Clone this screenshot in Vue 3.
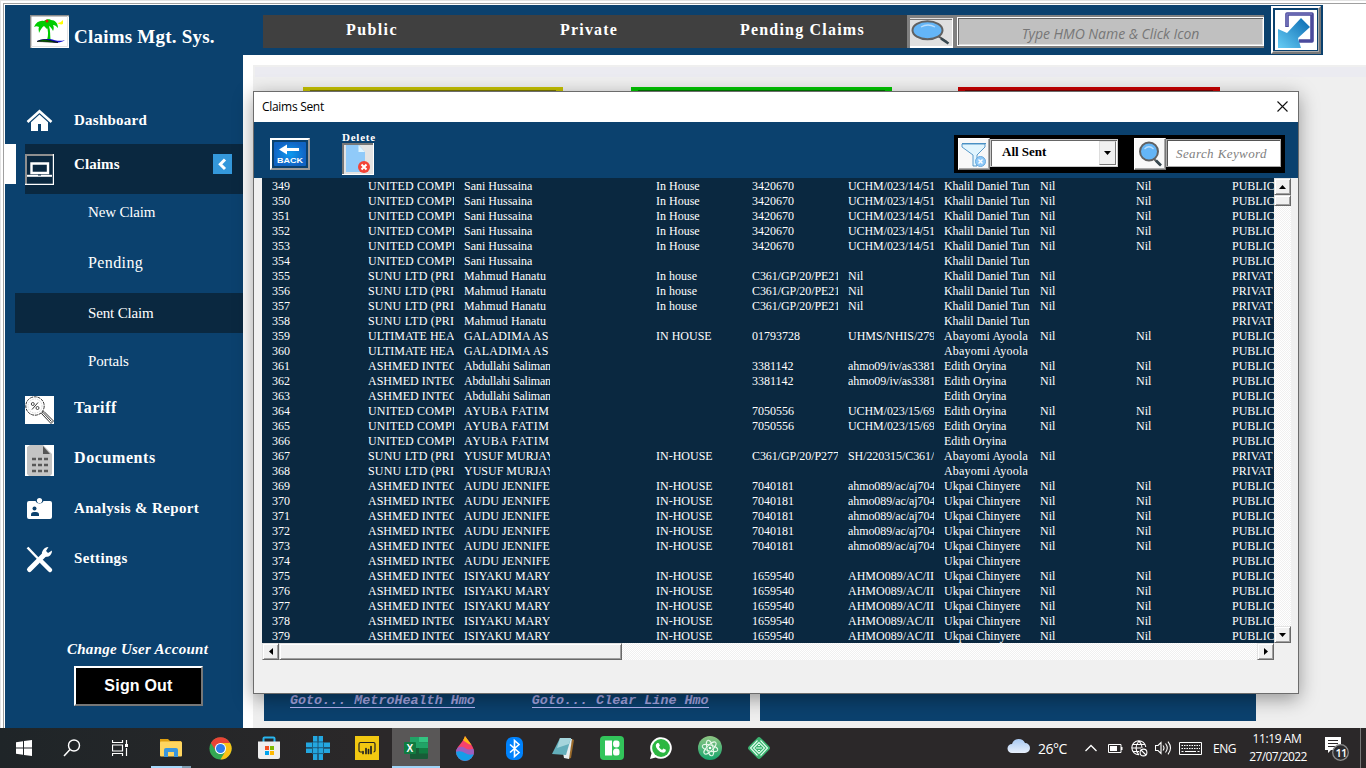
<script setup>
const nil = 'Nil'
const mk = (from, to, cells) =>
  Array.from({ length: to - from + 1 }, (_, i) => [String(from + i), ...cells])

const UN = 'UNITED COMPR'
const SU = 'SUNU LTD (PRI'
const UL = 'ULTIMATE HEA'
const AS = 'ASHMED INTEG'
const KD = 'Khalil Daniel Tun'
const AA = 'Abayomi Ayoola'
const EO = 'Edith Oryina'
const UC = 'Ukpai Chinyere'
const PU = 'PUBLIC'
const PR = 'PRIVAT'

const rows = [
  ...mk(349, 353, [UN, 'Sani Hussaina', '', 'In House', '3420670', 'UCHM/023/14/51', KD, nil, nil, PU]),
  ...mk(354, 354, [UN, 'Sani Hussaina', '', '', '', '', KD, '', '', PU]),
  ...mk(355, 357, [SU, 'Mahmud Hanatu', '', 'In house', 'C361/GP/20/PE21', nil, KD, nil, '', PR]),
  ...mk(358, 358, [SU, 'Mahmud Hanatu', '', '', '', '', KD, '', '', PR]),
  ...mk(359, 359, [UL, 'GALADIMA AS', '', 'IN HOUSE', '01793728', 'UHMS/NHIS/279', AA, nil, nil, PU]),
  ...mk(360, 360, [UL, 'GALADIMA AS', '', '', '', '', AA, '', '', PU]),
  ...mk(361, 362, [AS, 'Abdullahi Saliman', '', '', '3381142', 'ahmo09/iv/as3381', EO, nil, nil, PU]),
  ...mk(363, 363, [AS, 'Abdullahi Saliman', '', '', '', '', EO, '', '', PU]),
  ...mk(364, 365, [UN, 'AYUBA FATIM', '', '', '7050556', 'UCHM/023/15/69', EO, nil, nil, PU]),
  ...mk(366, 366, [UN, 'AYUBA FATIM', '', '', '', '', EO, '', '', PU]),
  ...mk(367, 367, [SU, 'YUSUF MURJAY', '', 'IN-HOUSE', 'C361/GP/20/P277', 'SH/220315/C361/', AA, nil, '', PR]),
  ...mk(368, 368, [SU, 'YUSUF MURJAY', '', '', '', '', AA, '', '', PR]),
  ...mk(369, 373, [AS, 'AUDU JENNIFE', '', 'IN-HOUSE', '7040181', 'ahmo089/ac/aj704', UC, nil, nil, PU]),
  ...mk(374, 374, [AS, 'AUDU JENNIFE', '', '', '', '', UC, '', '', PU]),
  ...mk(375, 379, [AS, 'ISIYAKU MARY', '', 'IN-HOUSE', '1659540', 'AHMO089/AC/II', UC, nil, nil, PU]),
]

const spacing = {
  [UN]: 'loose', [SU]: 'loose', [AA]: 'loose', [KD]: 'snug', [PR]: '',
  'GALADIMA AS': 'loose', 'AYUBA FATIM': 'wide', 'YUSUF MURJAY': '', 'AUDU JENNIFE': 'roomy',
  'Abdullahi Saliman': 'tight', 'ahmo09/iv/as3381': 'snug', 'ahmo089/ac/aj704': 'snug',
  'C361/GP/20/PE21': 'snug', 'C361/GP/20/P277': 'snug', 'UCHM/023/14/51': 'snug', 'UCHM/023/15/69': 'snug',
  'SH/220315/C361/': 'snug', 'Mahmud Hanatu': 'roomy',
}
</script>

<template>
  <div class="screen">
    <div class="app">
      <aside class="side">
        <div class="brand">
          <svg class="logo" width="39" height="33" viewBox="0 0 39 33">
            <rect width="39" height="33" fill="#fff" />
            <path d="M.7 33V.7H39" fill="none" stroke="#8c8c8c" stroke-width="1.400" />
            <path d="M37.500 1V31.500H1" fill="none" stroke="#e3e3e3" />
            <path d="M16.500 11c2 5 2 9 .5 14h3.500c-.5-5 0-9-1.500-14z" fill="#0c0" />
            <path d="M4 12c2-5 6-7 10-6 2-2 6-2 7-1 4 0 7 3 7 8-2-2-3-3-5-3 1 2 1 4 0 6-1-2-2-4-4-5l-2 3-3-3c-2 1-3 3-5 7 0-2-1-4 0-6-2-1-3-1-5 0z" fill="#0c0" />
            <circle cx="17" cy="6" r="1.500" fill="#e02010" />
            <path d="M27 8c3 0 4-1 6-3v4c-2 1-4 0-6-1z" fill="#ff0" />
            <path d="M7 26c5-2 9-2 13-2 5 1 9 3 15 1-4 3-9 3-13 2-5-1-9-1-15-1z" fill="#11c" />
            <path d="M7 26.500c5-2.500 9-2 13-1l8 2c-7 0-13-1-21-1z" fill="#060" stroke="#000" stroke-width=".6" />
          </svg>
          <span>Claims Mgt. Sys.</span>
        </div>
        <nav>
          <div class="item dash">
            <svg class="ico" width="30" height="30" viewBox="0 0 30 30">
              <path d="M2.500 17L14.500 6.200 26.500 17" fill="none" stroke="#fff" stroke-width="2.600" />
              <path d="M6 17.200l8.500-7.700 8.500 7.700V26h-7v-7h-3v7H6z" fill="#fff" />
            </svg>
            <span>Dashboard</span>
          </div>
          <div class="item claims">
            <svg class="ico" width="29" height="31" viewBox="0 0 29 31">
              <path d="M1 31V1H28" fill="none" stroke="#8f8f8f" stroke-width="2" />
              <path d="M28.500 0V30.500H0" fill="none" stroke="#fff" stroke-width="1.400" />
              <path d="M6.500 9.500H23V19H6.500z" fill="none" stroke="#fff" stroke-width="2.400" />
              <path d="M2 21.800H27" stroke="#fff" stroke-width="2" /><path d="M13 21h3" stroke="#0a2840" stroke-width="1" />
            </svg>
            <span>Claims</span>
            <svg class="chev" width="19" height="20" viewBox="0 0 19 20">
              <rect width="19" height="20" fill="#3498db" />
              <path d="M12 5.500L7.300 10.300 12 15" fill="none" stroke="#fff" stroke-width="3" />
            </svg>
          </div>
          <div class="sub new">New Claim</div>
          <div class="sub pend">Pending</div>
          <div class="sub sent">Sent Claim</div>
          <div class="sub port">Portals</div>
          <div class="item tariff">
            <svg class="ico" width="29" height="28" viewBox="0 0 29 28">
              <rect width="29" height="28" fill="#fff" />
              <circle cx="10" cy="10" r="9.200" fill="none" stroke="#333" stroke-width="1" stroke-dasharray="3 .8" />
              <circle cx="10" cy="10" r="7" fill="none" stroke="#bbb" stroke-width=".6" stroke-dasharray="1.500 1" />
              <circle cx="7.800" cy="8" r="1.500" fill="none" stroke="#222" stroke-width=".8" /><circle cx="12.500" cy="12" r="1.500" fill="none" stroke="#222" stroke-width=".8" />
              <path d="M13 6.500L7 13.500" stroke="#222" stroke-width=".9" />
              <path d="M16.500 17.500L19 15.500 28.500 25 26 27.500z M18.500 17l8 8.500" fill="none" stroke="#333" stroke-width="1" />
            </svg>
            <span>Tariff</span>
          </div>
          <div class="item docs">
            <svg class="ico" width="29" height="31" viewBox="0 0 29 31">
              <rect width="29" height="31" fill="#fff" />
              <path d="M5 0H18l9 9v20l-2 2H4l-2-2V2z" fill="#c4c4c4" />
              <path d="M18 1v8h7z" fill="#555" />
              <path d="M7 14h4m2 0h4m2 0h4M7 20h4m2 0h4m2 0h4M7 26h4m2 0h4m2 0h4" stroke="#585858" stroke-width="2.400" />
            </svg>
            <span>Documents</span>
          </div>
          <div class="item report">
            <svg class="ico" width="30" height="30" viewBox="0 0 30 30">
              <path d="M4 7h6.500q1 2.500 4 2.500t4-2.500H25q2 0 2 2v14q0 2-2 2H4q-2 0-2-2V9q0-2 2-2z" fill="#fff" />
              <circle cx="14.500" cy="6.500" r="2.600" fill="#fff" />
              <circle cx="9.500" cy="14.500" r="2" fill="#0b416e" /><path d="M6 22v-1.500q0-2.500 3-2.500h2q3 0 3 2.500V22z" fill="#0b416e" />
            </svg>
            <span>Analysis &amp; Report</span>
          </div>
          <div class="item sett">
            <svg class="ico" width="30" height="30" viewBox="0 0 30 30">
              <path d="M2.500 3.500l11 11.500" stroke="#fff" stroke-width="2.500" /><path d="M17 18l8 8" stroke="#fff" stroke-width="4.500" stroke-linecap="round" />
              <path d="M4.500 25.500L20 10" stroke="#fff" stroke-width="5" stroke-linecap="round" />
              <path d="M17.500 7q2-4 6-4l-2.500 4 2 2 4-2.500q0 4-3.500 6-4 1-6-1-1.500-2.500 0-4.500z" fill="#fff" />
            </svg>
            <span>Settings</span>
          </div>
        </nav>
        <div class="change">Change User Account</div>
        <button class="signout">Sign Out</button>
      </aside>

      <main class="main">
        <header class="top">
          <div class="menu">
            <span class="m1">Public</span><span class="m2">Private</span><span class="m3">Pending Claims</span>
          </div>
          <div class="hmo">
            <svg class="hmoicon" width="43" height="30" viewBox="0 0 43 30">
              <rect width="43" height="30" fill="#e0e0e0" />
              <path d="M0 1.500H42" stroke="#777" /><path d="M0 29H43" stroke="#fff" stroke-width="2" /><path d="M42.500 0V30" stroke="#fff" />
              <path d="M28 18l9 6" stroke="#555" stroke-width="2" /><path d="M31 20.500l7.500 5" stroke="#37474f" stroke-width="2.600" />
              <ellipse cx="17.500" cy="12.300" rx="15" ry="9" fill="#64b5f6" stroke="#616161" stroke-width="2" />
              <path d="M11 9q7-4 14 0" fill="none" stroke="#bbdefb" stroke-width="1.300" />
            </svg>
            <div class="hmoinput">Type HMO Name &amp; Click Icon</div>
          </div>
          <div class="exit">
            <svg width="42" height="40" viewBox="0 0 42 40">
              <defs><linearGradient id="ar" x1="1" y1="0" x2="0" y2="1"><stop offset="0" stop-color="#0868b0" /><stop offset="1" stop-color="#67cdf5" /></linearGradient></defs>
              <rect width="42" height="40" fill="#fff" />
              <path d="M12 17V4H37V31H24" fill="none" stroke="#4b4a9c" stroke-width="3.600" stroke-linejoin="round" />
              <path d="M12 16V4H37" fill="none" stroke="#8584c8" stroke-width="1.200" />
              <path d="M26 8l9 9-12 11 3 10H3V19l9 4z" fill="url(#ar)" />
            </svg>
          </div>
        </header>
        <section class="content">
          <div class="band"></div>
          <div class="cards"><i class="yel"></i><i class="grn"></i><i class="red"></i></div>
          <div class="panels">
            <div class="panel"><a class="l1">Goto... MetroHealth Hmo</a><a>Goto... Clear Line Hmo</a></div>
            <div class="panel"></div>
          </div>
        </section>
      </main>

      <div class="dialog">
        <div class="title">
          <span>Claims Sent</span>
          <svg width="11" height="11" viewBox="0 0 11 11"><path d="M.5.500l10 10M10.500.5l-10 10" stroke="#111" stroke-width="1.100" /></svg>
        </div>
        <div class="tools">
          <div class="back">
            <svg width="32" height="24" viewBox="0 0 32 24">
              <defs><radialGradient id="bk"><stop offset="0" stop-color="#0b9af0" /><stop offset="1" stop-color="#1164c4" /></radialGradient></defs>
              <rect width="32" height="24" rx="1" fill="url(#bk)" />
              <path d="M5 7.500l8-5V6H25v3H13v3.500z" fill="#fff" />
              <text x="3" y="20.500" font-family="Liberation Sans" font-weight="bold" font-size="7.500" fill="#fff" textLength="26" lengthAdjust="spacingAndGlyphs">BACK</text>
            </svg>
          </div>
          <div class="del">
            <span>Delete</span>
            <svg width="32" height="32" viewBox="0 0 32 32">
              <rect width="32" height="32" fill="#e3e3e3" />
              <path d="M0 1H31M1 0V32" stroke="#777" stroke-width="2" /><path d="M0 31.500H32M31.500 0V32" stroke="#fff" />
              <path d="M4 2H17l6 7v20H4z" fill="#90caf9" /><path d="M16.500 2v7H23z" fill="#e1f5fe" />
              <circle cx="22" cy="24" r="6" fill="#f44336" /><path d="M19.500 21.500l5 5m0-5l-5 5" stroke="#fff" stroke-width="2" />
            </svg>
          </div>
          <div class="filters">
            <div class="fbtn">
              <svg width="28" height="27" viewBox="0 0 28 27">
                <path d="M2 3H25v3l-8 8v11h-4V14L2 6z" fill="#e1f5fe" stroke="#4a90c4" stroke-width=".9" /><path d="M2 2.500H26" stroke="#4a90c4" />
                <circle cx="20.500" cy="20.500" r="5" fill="#90caf9" stroke="#6aaade" /><path d="M18.500 18.500l4 4m0-4l-4 4" stroke="#fff" stroke-width="1.400" />
              </svg>
            </div>
            <div class="combo"><span>All Sent</span><div class="arrow"><svg width="7" height="4" viewBox="0 0 7 4"><path d="M0 0H7L3.500 4z" /></svg></div></div>
            <div class="fbtn f2">
              <svg width="28" height="27" viewBox="0 0 28 27">
                <path d="M17 17l7 7" stroke="#616161" stroke-width="2" /><path d="M20 19.500l5 5" stroke="#37474f" stroke-width="2.600" />
                <circle cx="13" cy="10.500" r="9" fill="#64b5f6" stroke="#616161" stroke-width="2" /><path d="M8.500 8q4.500-4.500 9 0" fill="none" stroke="#bbdefb" stroke-width="1.300" />
              </svg>
            </div>
            <div class="kw">Search Keyword</div>
          </div>
        </div>
        <div class="grid">
          <div class="list">
            <div v-for="r in rows" :key="r[0]" class="row">
              <span v-for="(c, i) in r" :key="i" :class="spacing[c]">{{ c }}</span>
            </div>
          </div>
          <div class="vbar">
            <div class="sb"><svg width="7" height="4" viewBox="0 0 7 4"><path d="M0 4H7L3.500 0z" /></svg></div>
            <div class="vthumb"></div>
            <div class="sb end"><svg width="7" height="4" viewBox="0 0 7 4"><path d="M0 0H7L3.500 4z" /></svg></div>
          </div>
          <div class="hbar">
            <div class="sb"><svg width="4" height="7" viewBox="0 0 4 7"><path d="M4 0V7L0 3.500z" /></svg></div>
            <div class="hthumb"></div>
            <div class="sb end"><svg width="4" height="7" viewBox="0 0 4 7"><path d="M0 0V7L4 3.500z" /></svg></div>
          </div>
        </div>
      </div>
    </div>

    <footer class="task">
      <div class="tb"><svg width="16" height="16" viewBox="0 0 16 16"><path d="M0 2.200L7 1.200V7.500H0zM8 1.100L16 0V7.500H8zM0 8.500H7V14.800L0 13.800zM8 8.500H16V16L8 14.900z" fill="#fff" /></svg></div>
      <div class="tb"><svg width="18" height="18" viewBox="0 0 18 18"><circle cx="11" cy="6.500" r="5.500" fill="none" stroke="#fff" stroke-width="1.400" /><path d="M7 10.500L1 17" stroke="#fff" stroke-width="1.500" /></svg></div>
      <div class="tb"><svg width="16" height="16" viewBox="0 0 16 16"><path d="M.5 0V2.500H10.500V0M.5 5H10.500V11H.5zM.5 16V13.500H10.500V16M14.500 0V4M14.500 8V16" fill="none" stroke="#fff" stroke-width="1.200" /><rect x="13" y="4" width="3" height="3" fill="#fff" /></svg></div>
      <div class="pins">
        <div class="tb open"><svg width="22" height="20" viewBox="0 0 22 20"><path d="M0 1H8l2 2H21V6H0z" fill="#e0a010" /><rect y="3.500" width="22" height="15" rx="1" fill="#ffd660" /><path d="M4 19V12q0-2 2-2H16q2 0 2 2V19H14V14H8V19z" fill="#3a96dd" /></svg></div>
        <div class="tb"><svg width="23" height="23" viewBox="0 0 24 24"><circle cx="12" cy="12" r="11.500" fill="#34a853" /><path d="M2 6.200A11.500 11.500 0 0 1 22 6.200H12L7 14z" fill="#ea4335" /><path d="M22 6.200A11.500 11.500 0 0 1 12 23.500L17 15 17 9.500 12 6.200z" fill="#fbc116" /><circle cx="12" cy="12" r="5.800" fill="#fff" /><circle cx="12" cy="12" r="4.700" fill="#2f7ded" /></svg></div>
        <div class="tb"><svg width="24" height="24" viewBox="0 0 24 24"><path d="M6.500 6V2.500q0-1 1-1h9q1 0 1 1V6" fill="none" stroke="#28b5ee" stroke-width="2" /><path d="M1 5.500H23V21q0 2-2 2H3q-2 0-2-2z" fill="#eee" /><path d="M8 10h4v4H8z" fill="#f25022" /><path d="M13 10h4v4h-4z" fill="#7fba00" /><path d="M8 15h4v4H8z" fill="#00a4ef" /><path d="M13 15h4v4h-4z" fill="#ffb900" /></svg></div>
        <div class="tb"><svg width="24" height="24" viewBox="0 0 24 24"><path d="M7 0h4.500v24H7zM12.500 0H17v24h-4.500zM0 6.500h24V11H0zM0 12.500h24V17H0z" fill="#23a7e0" /><path d="M7 5.900h10M0 11.700h24M7 17.600h10M6.500 6v12M12 0v24M17.500 6v12" stroke="#1c5d80" stroke-width="1" /></svg></div>
        <div class="tb"><svg width="24" height="24" viewBox="0 0 24 24"><rect width="24" height="24" fill="#f2c811" /><path d="M7 16H5.500Q4 16 4 14.500V8q0-1.500 1.500-1.500h13Q20 6.500 20 8v6.500q0 1.500-1.500 1.500" fill="none" stroke="#222" stroke-width="1.200" /><path d="M8 17.500v-2M11 17.500v-5M13.500 17.500v-4M16 17.500v-7" stroke="#222" stroke-width="1.700" stroke-linecap="round" /></svg></div>
        <div class="tb active"><svg width="24" height="22" viewBox="0 0 24 22"><rect x="6" width="18" height="22" rx="1" fill="#185c37" /><path d="M6 0h9v11H6z" fill="#21a366" /><path d="M15 0h9v5.500h-9z" fill="#33c481" /><path d="M15 5.500h9V11h-9z" fill="#21a366" /><path d="M15 11h9v5.500h-9z" fill="#107c41" /><rect y="5" width="12" height="12" rx="1" fill="#107c41" /><text x="2.600" y="14.500" font-family="Liberation Sans" font-weight="bold" font-size="10" fill="#fff">X</text></svg></div>
        <div class="tb"><svg width="20" height="25" viewBox="0 0 20 25"><defs><clipPath id="dp"><path d="M10 0C15 7 19 11 19 16a9 9 0 0 1-18 0C1 11 8 7 10 0z" /></clipPath></defs><g clip-path="url(#dp)"><rect width="20" height="25" fill="#f5426c" /><path d="M5 0h15v10Q14 9 9 5z" fill="#fdb813" /><path d="M0 13q6-4 10-1t10 0v6q-5 3-9 0T0 17z" fill="#9b5fc0" /><path d="M0 16q6-2 10 1t10 1v8H0z" fill="#159de9" /></g></svg></div>
        <div class="tb"><svg width="17" height="23" viewBox="0 0 17 23"><rect width="17" height="23" rx="6.500" fill="#0082fc" /><path d="M4 7.500l9 8-4.500 4V3.500L13 7.500l-9 8" fill="none" stroke="#fff" stroke-width="1.600" /></svg></div>
        <div class="tb"><svg width="24" height="22" viewBox="0 0 24 22"><path d="M21 2l2 1-3 18-3 1z" fill="#9a6a2a" /><path d="M9 1l12 1-3 20-5-1z" fill="#e8eef0" /><path d="M9 1h11l-5 17L1 17z" fill="#63aebb" /><path d="M9 1h11l-2 6L6 11z" fill="#a5d5dc" /></svg></div>
        <div class="tb"><svg width="24" height="24" viewBox="0 0 24 24"><rect width="24" height="24" rx="4" fill="#32c45a" /><path d="M5 4.500h7v15H5z" fill="#fff" /><path d="M15 4.500h2a2.500 2.500 0 0 1 2.500 2.500v1.500a3 3 0 0 1-3 3q-3.500 0-3.500-3.500t2-3.500zM16.500 12.500a3 3 0 0 1 3 3V17a2.500 2.500 0 0 1-2.500 2.500h-2q-2 0-2-3.500t3.500-3.500z" fill="#fff" /></svg></div>
        <div class="tb"><svg width="22" height="22" viewBox="0 0 24 24"><path d="M0 24l1.700-6.200A11.800 11.800 0 1 1 6.200 22.300z" fill="#fff" /><circle cx="12" cy="12" r="9.700" fill="#2cb742" /><path d="M8 6.500l1.800.2 1 2.700-1.100 1.500q1.300 2.300 3.500 3.200l1.400-1.500 2.700 1.300q0 3-3 3.300Q11 17 8.300 13.500 4.500 9 8 6.500z" fill="#fff" /></svg></div>
        <div class="tb"><svg width="24" height="24" viewBox="0 0 24 24"><defs><linearGradient id="at" x1="0" y1="0" x2="0" y2="1"><stop offset="0" stop-color="#8fc583" /><stop offset="1" stop-color="#16a56c" /></linearGradient></defs><circle cx="12" cy="12" r="12" fill="url(#at)" /><g fill="none" stroke="#e6f7e8" stroke-width="1"><ellipse cx="12" cy="12" rx="8" ry="3" transform="rotate(15 12 12)" /><ellipse cx="12" cy="12" rx="8" ry="3" transform="rotate(75 12 12)" /><ellipse cx="12" cy="12" rx="8" ry="3" transform="rotate(135 12 12)" /></g><circle cx="12" cy="12" r="1.300" fill="#fff" /></svg></div>
        <div class="tb"><svg width="24" height="24" viewBox="0 0 24 24"><rect x="3.600" y="3.600" width="16.800" height="16.800" rx="2.500" transform="rotate(45 12 12)" fill="#3cb371" /><path d="M10.500 4.500L3.500 12l7 7.500M13.500 4.500l7 7.500-7 7.500M12 6.500L6.500 12l5.500 5.500 5.500-5.500z" fill="none" stroke="#e4fff0" stroke-width="1.100" /><path d="M9 12h6M11 9.500h2M11 14.500h2" stroke="#e4fff0" /></svg></div>
      </div>
      <div class="tray">
        <svg class="cloud" width="23" height="16" viewBox="0 0 23 16"><defs><linearGradient id="cl" x1="0" y1="0" x2="0" y2="1"><stop offset="0" stop-color="#a9c9f2" /><stop offset="1" stop-color="#e8f0fc" /></linearGradient></defs><path d="M5 15a4.500 4.500 0 0 1 0-9 7 7 0 0 1 13-1 5 5 0 0 1 0 10z" fill="url(#cl)" /></svg>
        <span class="temp">26°C</span>
        <svg class="up" width="12" height="8" viewBox="0 0 12 8"><path d="M.5 7L6 1.500 11.500 7" fill="none" stroke="#fff" stroke-width="1.300" /></svg>
        <svg class="bat" width="15" height="9" viewBox="0 0 15 9"><path d="M.5.5H13v8H.5z" fill="none" stroke="#fff" /><path d="M2 2h7v5H2zM13 3h1.500v3H13z" fill="#fff" /></svg>
        <svg class="globe" width="17" height="17" viewBox="0 0 17 17"><g fill="none" stroke="#fff" stroke-width="1.100"><path d="M14.800 7A7 7 0 1 0 8 14.700M1 8h9M2 4.500h12M2 11.500h6M8 1q-6 7 0 14M8 1q3 3 3 7" /><circle cx="12.500" cy="12.500" r="3.400" /><path d="M10 10l5 5" /></g></svg>
        <svg class="spk" width="17" height="14" viewBox="0 0 17 14"><g fill="none" stroke="#fff" stroke-width="1.100"><path d="M.5 4.500H3L6 1.500V12.500L3 9.500H.5zM8 4.500q2 2.500 0 5M10.500 2.500q3.500 4.500 0 9M13 .7q5 6.300 0 12.600" /></g></svg>
        <svg class="kbd" width="23" height="13" viewBox="0 0 23 13"><path d="M.5.5H22.500V12.500H.5z" fill="none" stroke="#fff" /><path d="M2.500 3.500H21M2.500 6.500H21" stroke="#fff" stroke-dasharray="1.500 1" /><path d="M2.500 9.500h2M6 9.500H17M18.500 9.500h2" stroke="#fff" /></svg>
        <span class="eng">ENG</span>
        <div class="clock"><span class="t1">11:19 AM</span><span class="t2">27/07/2022</span></div>
        <svg class="note" width="26" height="26" viewBox="0 0 26 26"><path d="M1 1H17V14H7L4 17V14H1z" fill="#fff" /><path d="M4 4.500h10M4 7.500h10M4 10.500h7" stroke="#2b2829" stroke-width="1.100" /><circle cx="16.500" cy="16.500" r="7.800" fill="#2d2d30" stroke="#8d8d8d" stroke-width="1.300" /><text x="11.600" y="21" font-family="Open Sans, sans-serif" font-size="11" font-weight="600" fill="#fff" letter-spacing="-1">11</text></svg>
        <i class="desk"></i>
      </div>
    </footer>
  </div>
</template>

<style>
html, body { margin: 0; overflow: hidden; }
</style>

<style scoped>
* { box-sizing: border-box; }
svg { display: block; flex: none; }
.screen { width: 1366px; height: 768px; display: flex; flex-direction: column; background: #fff; overflow: hidden; font-family: "Liberation Serif", serif; white-space: nowrap; }
.app { height: 728px; position: relative; display: flex; border: 1px solid #e3e3e3; border-width: 1px 0 0 1px; background: #fff; padding: 4px 0 0 4px; box-shadow: inset 2px 2px 0 #fff, inset 3px 3px 0 #a0a0a0; }
.side { width: 238px; height: 723px; background: #0b416e; color: #fff; flex: none; }
.brand { height: 91px; padding: 10px 0 0 25px; display: flex; font-size: 19px; font-weight: bold; letter-spacing: .22px; }
.brand span { margin: 11px 0 0 5px; line-height: 22px; }
.item { height: 50px; display: flex; align-items: center; padding-left: 20px; font-size: 15px; font-weight: bold; }
.item .ico { width: 30px; margin-right: 19px; }
.dash { height: 48px; letter-spacing: .25px; }
.claims { position: relative; align-items: flex-start; letter-spacing: .1px; background: linear-gradient(90deg, #0b416e 20px, #0a2840 20px); }
.claims::before { content: ""; position: absolute; left: 0; top: 0; width: 11px; height: 40px; background: #fff; }
.claims .ico { width: 29px; margin: 10px 20px 0 0; }
.claims span { line-height: 20px; margin-top: 10px; }
.claims .chev { margin: 10px 11px 0 auto; }
.sub { padding-left: 83px; font-size: 15px; display: flex; align-items: center; letter-spacing: -.15px; }
.new { height: 36px; }
.pend { height: 63px; padding-top: 3px; font-size: 16px; letter-spacing: .4px; }
.sent { height: 40px; margin-left: 10px; padding-left: 73px; background: #0a2840; }
.port { height: 44px; margin-top: 6px; }
.tariff { font-size: 16px; letter-spacing: .6px; }
.tariff .ico, .docs .ico { width: 29px; margin-right: 20px; margin-top: 4px; }
.docs { font-size: 16px; letter-spacing: .6px; }
.report { letter-spacing: .35px; }
.sett { letter-spacing: .35px; }
.report .ico, .sett .ico { margin-top: 2px; }
.change { margin: 57px 0 0 62px; font-size: 15px; line-height: 18px; font-weight: bold; font-style: italic; letter-spacing: .26px; }
.signout { display: block; margin: 8px 0 0 69px; width: 129px; height: 40px; padding: 0; background: #000; color: #fff; border: 2px solid; border-color: #fff #777 #777 #fff; font: bold 16px "Liberation Sans", sans-serif; letter-spacing: .2px; }
.main { flex: 1; height: 723px; display: flex; flex-direction: column; }
.top { width: 1080px; height: 50px; background: #0b416e; padding-left: 20px; display: flex; }
.menu { margin-top: 10px; width: 644px; height: 33px; background: #404040; color: #fff; font-size: 16px; font-weight: bold; letter-spacing: 1.2px; line-height: 30px; display: flex; }
.m1 { width: 214px; padding-left: 83px; letter-spacing: 1.4px; }
.m2 { width: 263px; padding-left: 83px; }
.hmo { margin-top: 10px; width: 357px; height: 33px; background: #808080; display: flex; padding: 3px 0 0 3px; }
.hmoinput { margin: -1px 0 0 4px; width: 307px; height: 29px; background: #c0c0c0; border: 1px solid #fff; box-shadow: inset 1px 1px 0 #666, inset -1px -1px 0 #ddd; text-align: center; font: italic 14px/32px "Open Sans", sans-serif; letter-spacing: -.05px; color: #777; }
.exit { margin: 1px 0 0 7px; width: 50px; height: 48px; border: 2px solid; border-color: #fff #777 #777 #fff; padding: 2px; box-shadow: inset -1px -1px 0 #aaa; }
.content { margin: 10px 0 0 10px; height: 663px; background: #efefef; padding: 2px 0 0 2px; }
.band { height: 10px; background: #ebebf1; }
.cards { display: flex; margin: 10px 0 0 48px; height: 40px; }
.cards i { border: 7px solid; border-top-width: 3px; }
.yel { width: 260px; background: #777400; border-color: #c4c000 !important; }
.grn { width: 261px; margin-left: 68px; background: #007300; border-color: #00c400 !important; }
.red { width: 262px; margin-left: 66px; background: #700; border-color: #c60000 !important; }
.panels { display: flex; gap: 10px; margin: 554px 0 0 9px; }
.panel { width: 486px; height: 40px; background: #0b416e; padding: 0 0 0 26px; display: flex; align-items: flex-start; }
.panel + .panel { width: 496px; }
.panel a { margin-top: 11px; font: italic bold 13.400px/17px "Liberation Mono", monospace; color: #a6a6e2; border-bottom: 1px solid #b5b5f5; height: 16px; }
.panel .l1 { margin-right: 57px; }
.dialog { position: absolute; left: 252px; top: 90px; width: 1046px; height: 603px; border: 1px solid #6c6c6c; background: #f0f0f0; box-shadow: 0 5px 18px rgba(0, 0, 0, .38); }
.title { height: 30px; background: #fff; display: flex; align-items: center; justify-content: space-between; padding: 0 10px 2px 8px; font: 12px "Open Sans", sans-serif; letter-spacing: -.3px; color: #000; }
.tools { height: 56px; background: #0b416e; display: flex; color: #fff; }
.back { margin: 16px 0 0 16px; width: 40px; height: 32px; padding: 2px; border: 2px solid; border-color: #fff #999 #999 #fff; }
.del { margin: 9px 0 0 32px; font-size: 11px; font-weight: bold; letter-spacing: .75px; width: 40px; }
.del span { display: block; line-height: 12px; }
.filters { margin: 13px 0 0 572px; width: 331px; height: 38px; background: #000; display: flex; padding: 3px 0 0 4px; }
.fbtn { width: 32px; height: 32px; background: #f8f8f8; border: 1px solid; border-color: #fff #777 #777 #fff; padding: 2px 1px; box-shadow: inset -1px -1px 0 #aaa; }
.combo { margin-top: 1px; width: 128px; height: 28px; background: #fff; color: #000; border: 1px solid #ccc; box-shadow: inset 1px 1px 0 #666; display: flex; justify-content: space-between; padding: 1px; font-size: 13px; font-weight: bold; }
.combo span { padding-left: 10px; line-height: 21px; }
.arrow { width: 17px; height: 24px; background: #f0f0f0; border: 1px solid; border-color: #ddd #777 #777 #ddd; display: flex; align-items: center; justify-content: center; }
.f2 { margin-left: 16px; }
.kw { margin-top: 1px; width: 115px; height: 28px; background: #fff; border: 1px solid #aaa; box-shadow: inset 1px 1px 0 #555; font-size: 13px; font-style: italic; color: #808080; line-height: 28px; padding-left: 9px; letter-spacing: .4px; }
.grid { margin-left: 8px; display: grid; grid-template: 465px 17px / 1012px 17px; }
.list { background: #0a2840; overflow: hidden; color: #fff; }
.row { height: 15px; padding-left: 10px; display: grid; grid-template-columns: repeat(10, 86px) 42px; column-gap: 10px; font-size: 12px; line-height: 16px; }
.row span { overflow: hidden; height: 16px; min-width: 0; }
.row .tight { letter-spacing: -.2px; }
.row .snug { letter-spacing: -.08px; }
.row .roomy { letter-spacing: .08px; }
.row .loose { letter-spacing: .2px; }
.row .wide { letter-spacing: .6px; }
.vbar, .hbar { background: repeating-conic-gradient(#fff 0 25%, #f0f0f0 0 50%) 0 0 / 2px 2px; display: flex; }
.vbar { flex-direction: column; }
.sb { width: 17px; height: 17px; background: #f0f0f0; border: 1px solid; border-color: #e3e3e3 #696969 #696969 #e3e3e3; box-shadow: inset 1px 1px 0 #fff, inset -1px -1px 0 #a0a0a0; display: flex; align-items: center; justify-content: center; flex: none; }
.vthumb { height: 11px; }
.hthumb { width: 343px; }
.vthumb, .hthumb { background: #f0f0f0; border: 1px solid; border-color: #e3e3e3 #696969 #696969 #e3e3e3; box-shadow: inset 1px 1px 0 #fff, inset -1px -1px 0 #a0a0a0; }
.vbar .end { margin-top: auto; }
.hbar .end { margin-left: auto; }
.task { height: 40px; background: linear-gradient(90deg, #1f2528, #2b2829 28%, #2b2829); display: flex; position: relative; z-index: 1; color: #fff; font-family: "Open Sans", sans-serif; }
.tb { width: 48px; height: 40px; display: flex; align-items: center; justify-content: center; flex: none; }
.pins { margin-left: 3px; display: flex; gap: 1px; }
.active { background: #595757; border-bottom: 2px solid #9fd4f7; padding-top: 1px; }
.open { background: linear-gradient(90deg, transparent 4px, #a5d8fa 4px, #a5d8fa 35px, #7d9cb0 35px, #7d9cb0 44px, transparent 44px) 0 38px / 48px 2px no-repeat; }
.tray { margin-left: auto; width: 359px; display: flex; align-items: center; font-size: 12px; }
.cloud { margin-top: -4px; }
.temp { width: 47px; margin-left: 8px; font-size: 14px; letter-spacing: -.5px; }
.bat { margin-left: 11px; }
.globe { margin-left: 8px; }
.spk { margin-left: 7px; }
.kbd { margin-left: 7px; }
.eng { margin-left: 11px; width: 26px; letter-spacing: -.5px; }
.clock { margin-left: 5px; width: 68px; display: flex; flex-direction: column; align-items: center; line-height: 18px; }
.t1 { letter-spacing: -.4px; margin-right: 2px; }
.t2 { letter-spacing: -.6px; }
.note { margin: 2px 0 0 12px; }
.desk { margin-left: 10px; width: 1px; height: 40px; background: #777; }
</style>
